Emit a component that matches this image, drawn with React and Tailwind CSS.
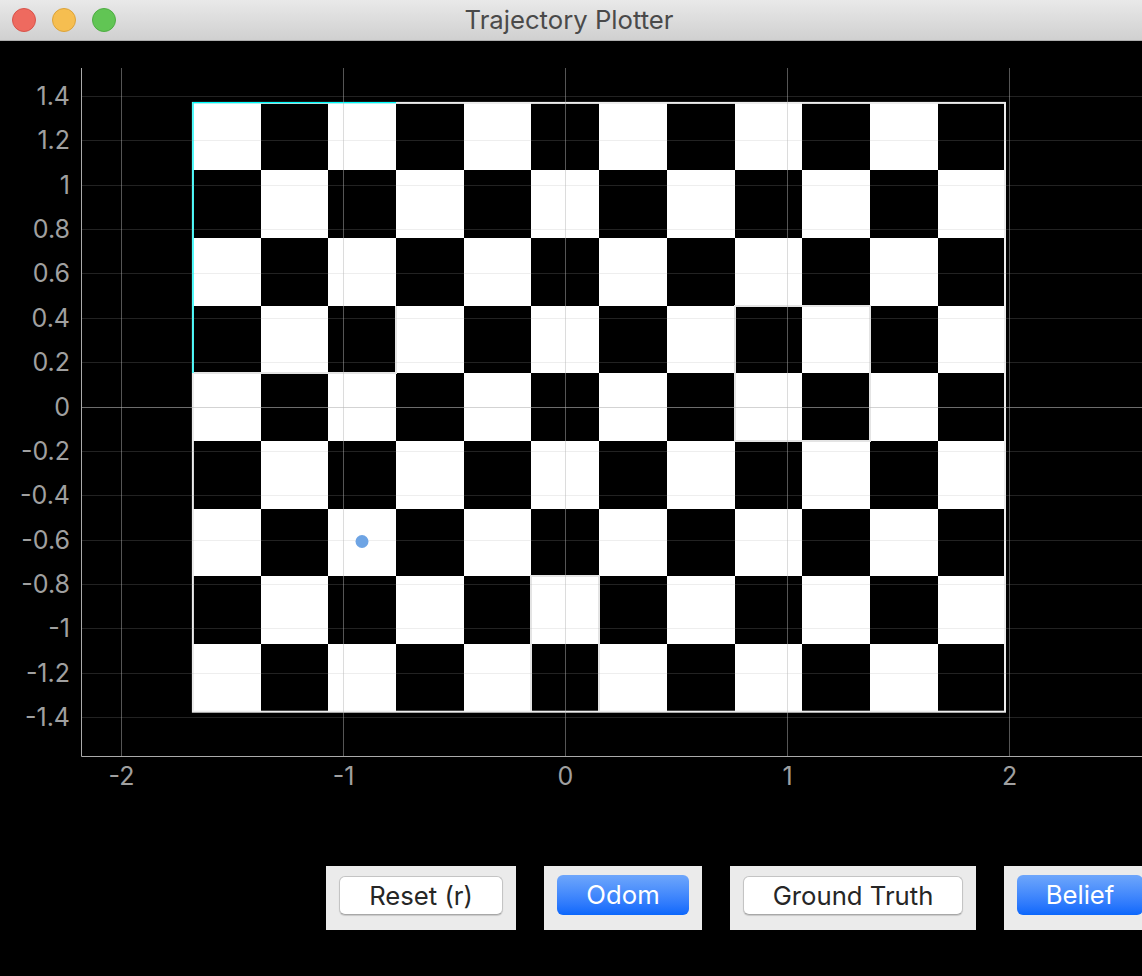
import React from 'react';

const xEdges = [192, 261, 328, 396, 464, 531, 599, 667, 735, 802, 870, 938, 1005];
const yEdges = [102, 170, 238, 306, 373, 441, 509, 576, 644, 712];

const yTicks = ['1.4', '1.2', '1', '0.8', '0.6', '0.4', '0.2', '0', '-0.2', '-0.4', '-0.6', '-0.8', '-1', '-1.2', '-1.4'];
const xTicks = [['-2', 121.5], ['-1', 343.5], ['0', 565.5], ['1', 787.5], ['2', 1009.5]];

// Trajectory outline traces left over on the board
const traces = [
  'M192 373H396V306',
  'M735 441V306H870V441Z',
  'M531 712V576H599V712',
];

const TrafficLight = ({ color }) => (
  <div className={`w-6 h-6 rounded-full border ${color}`}></div>
);

const Chart = () => (
  <svg width="1142" height="825" viewBox="0 41 1142 825" className="block" fontFamily="Inter, sans-serif">
    {/* Checkerboard */}
    <rect x="192" y="102" width="813" height="610" fill="#fff" />
    {yEdges.slice(0, -1).map((y, r) =>
      xEdges.slice(0, -1).map((x, c) =>
        (r + c) % 2 === 1 ? (
          <rect key={`${r}-${c}`} x={x} y={y} width={xEdges[c + 1] - x} height={yEdges[r + 1] - y} fill="#000" />
        ) : null
      )
    )}
    {traces.map((d) => (
      <path key={d} d={d} fill="none" stroke="#e4e4e4" strokeWidth="2" />
    ))}
    <rect x="192.9" y="102.9" width="812.1" height="608.8" fill="none" stroke="#ececec" strokeWidth="2" />
    <path d="M193 373V102.7H396" fill="none" stroke="#00ffff" strokeWidth="1.3" />

    {/* Grid */}
    {yTicks.map((label, i) => {
      const y = Math.round(96 + i * 44.36) + 0.5;
      return (
        <g key={label}>
          <line
            x1="82"
            x2="1142"
            y1={y}
            y2={y}
            stroke={label === '0' ? '#b5b5b5' : '#aaa'}
            strokeOpacity={label === '0' ? 0.6 : 0.2}
          />
          <text x="70" y={y + 8.5} textAnchor="end" fontSize="25" fill="#a0a0a0">
            {label}
          </text>
        </g>
      );
    })}
    {xTicks.map(([label, x]) => (
      <g key={label}>
        <line x1={x} x2={x} y1="68" y2="756" stroke="#b5b5b5" strokeOpacity="0.47" />
        <text x={x} y="785" textAnchor="middle" fontSize="25" fill="#a0a0a0">
          {label}
        </text>
      </g>
    ))}
    <path d="M81.5 68V756.5H1142" fill="none" stroke="#aaa" />

    {/* Robot position */}
    <circle cx="362" cy="541.5" r="6.5" fill="#6ea4e4" />
  </svg>
);

const Panel = ({ pad, children }) => (
  <div className={`shrink-0 h-16 bg-[#ebebeb] flex items-center ${pad}`}>{children}</div>
);

const WhiteButton = ({ width, label }) => (
  <button className={`${width} h-[39px] mb-[6px] rounded-md bg-white border border-[#c4c4c4] border-b-[#a8a8a8] shadow-[0_1px_1px_rgba(0,0,0,0.15)] text-[25.7px] text-[#262626]`}>
    {label}
  </button>
);

const BlueButton = ({ width, label }) => (
  <button className={`${width} h-10 mb-[6px] rounded-md bg-gradient-to-b from-[#6ea6fb] to-[#0a67fc] text-[25.7px] text-white`}>
    {label}
  </button>
);

export default function App() {
  return (
    <div className="w-[1142px] h-[976px] bg-black overflow-hidden font-['Inter',sans-serif]">
      {/* Title bar */}
      <div className="relative h-[41px] flex items-center px-3 gap-4 bg-gradient-to-b from-[#e9e9e9] to-[#d0d0d0] border-b border-[#aeaeae]">
        <TrafficLight color="bg-[#ee6a5f] border-[#d8534a]" />
        <TrafficLight color="bg-[#f6be50] border-[#dca33a]" />
        <TrafficLight color="bg-[#61c554] border-[#4ead43]" />
        <div className="absolute inset-0 pr-1 flex items-center justify-center text-[25.7px] text-[#4a4a4a]">
          Trajectory Plotter
        </div>
      </div>

      <Chart />

      {/* Controls */}
      <div className="flex gap-7 pl-[326px]">
        <Panel pad="px-[13px]">
          <WhiteButton width="w-[164px]" label="Reset (r)" />
        </Panel>
        <Panel pad="px-[13px]">
          <BlueButton width="w-[132px]" label="Odom" />
        </Panel>
        <Panel pad="px-[13px]">
          <WhiteButton width="w-[220px]" label="Ground Truth" />
        </Panel>
        <Panel pad="px-[13px]">
          <BlueButton width="w-[126px]" label="Belief" />
        </Panel>
      </div>
    </div>
  );
}
